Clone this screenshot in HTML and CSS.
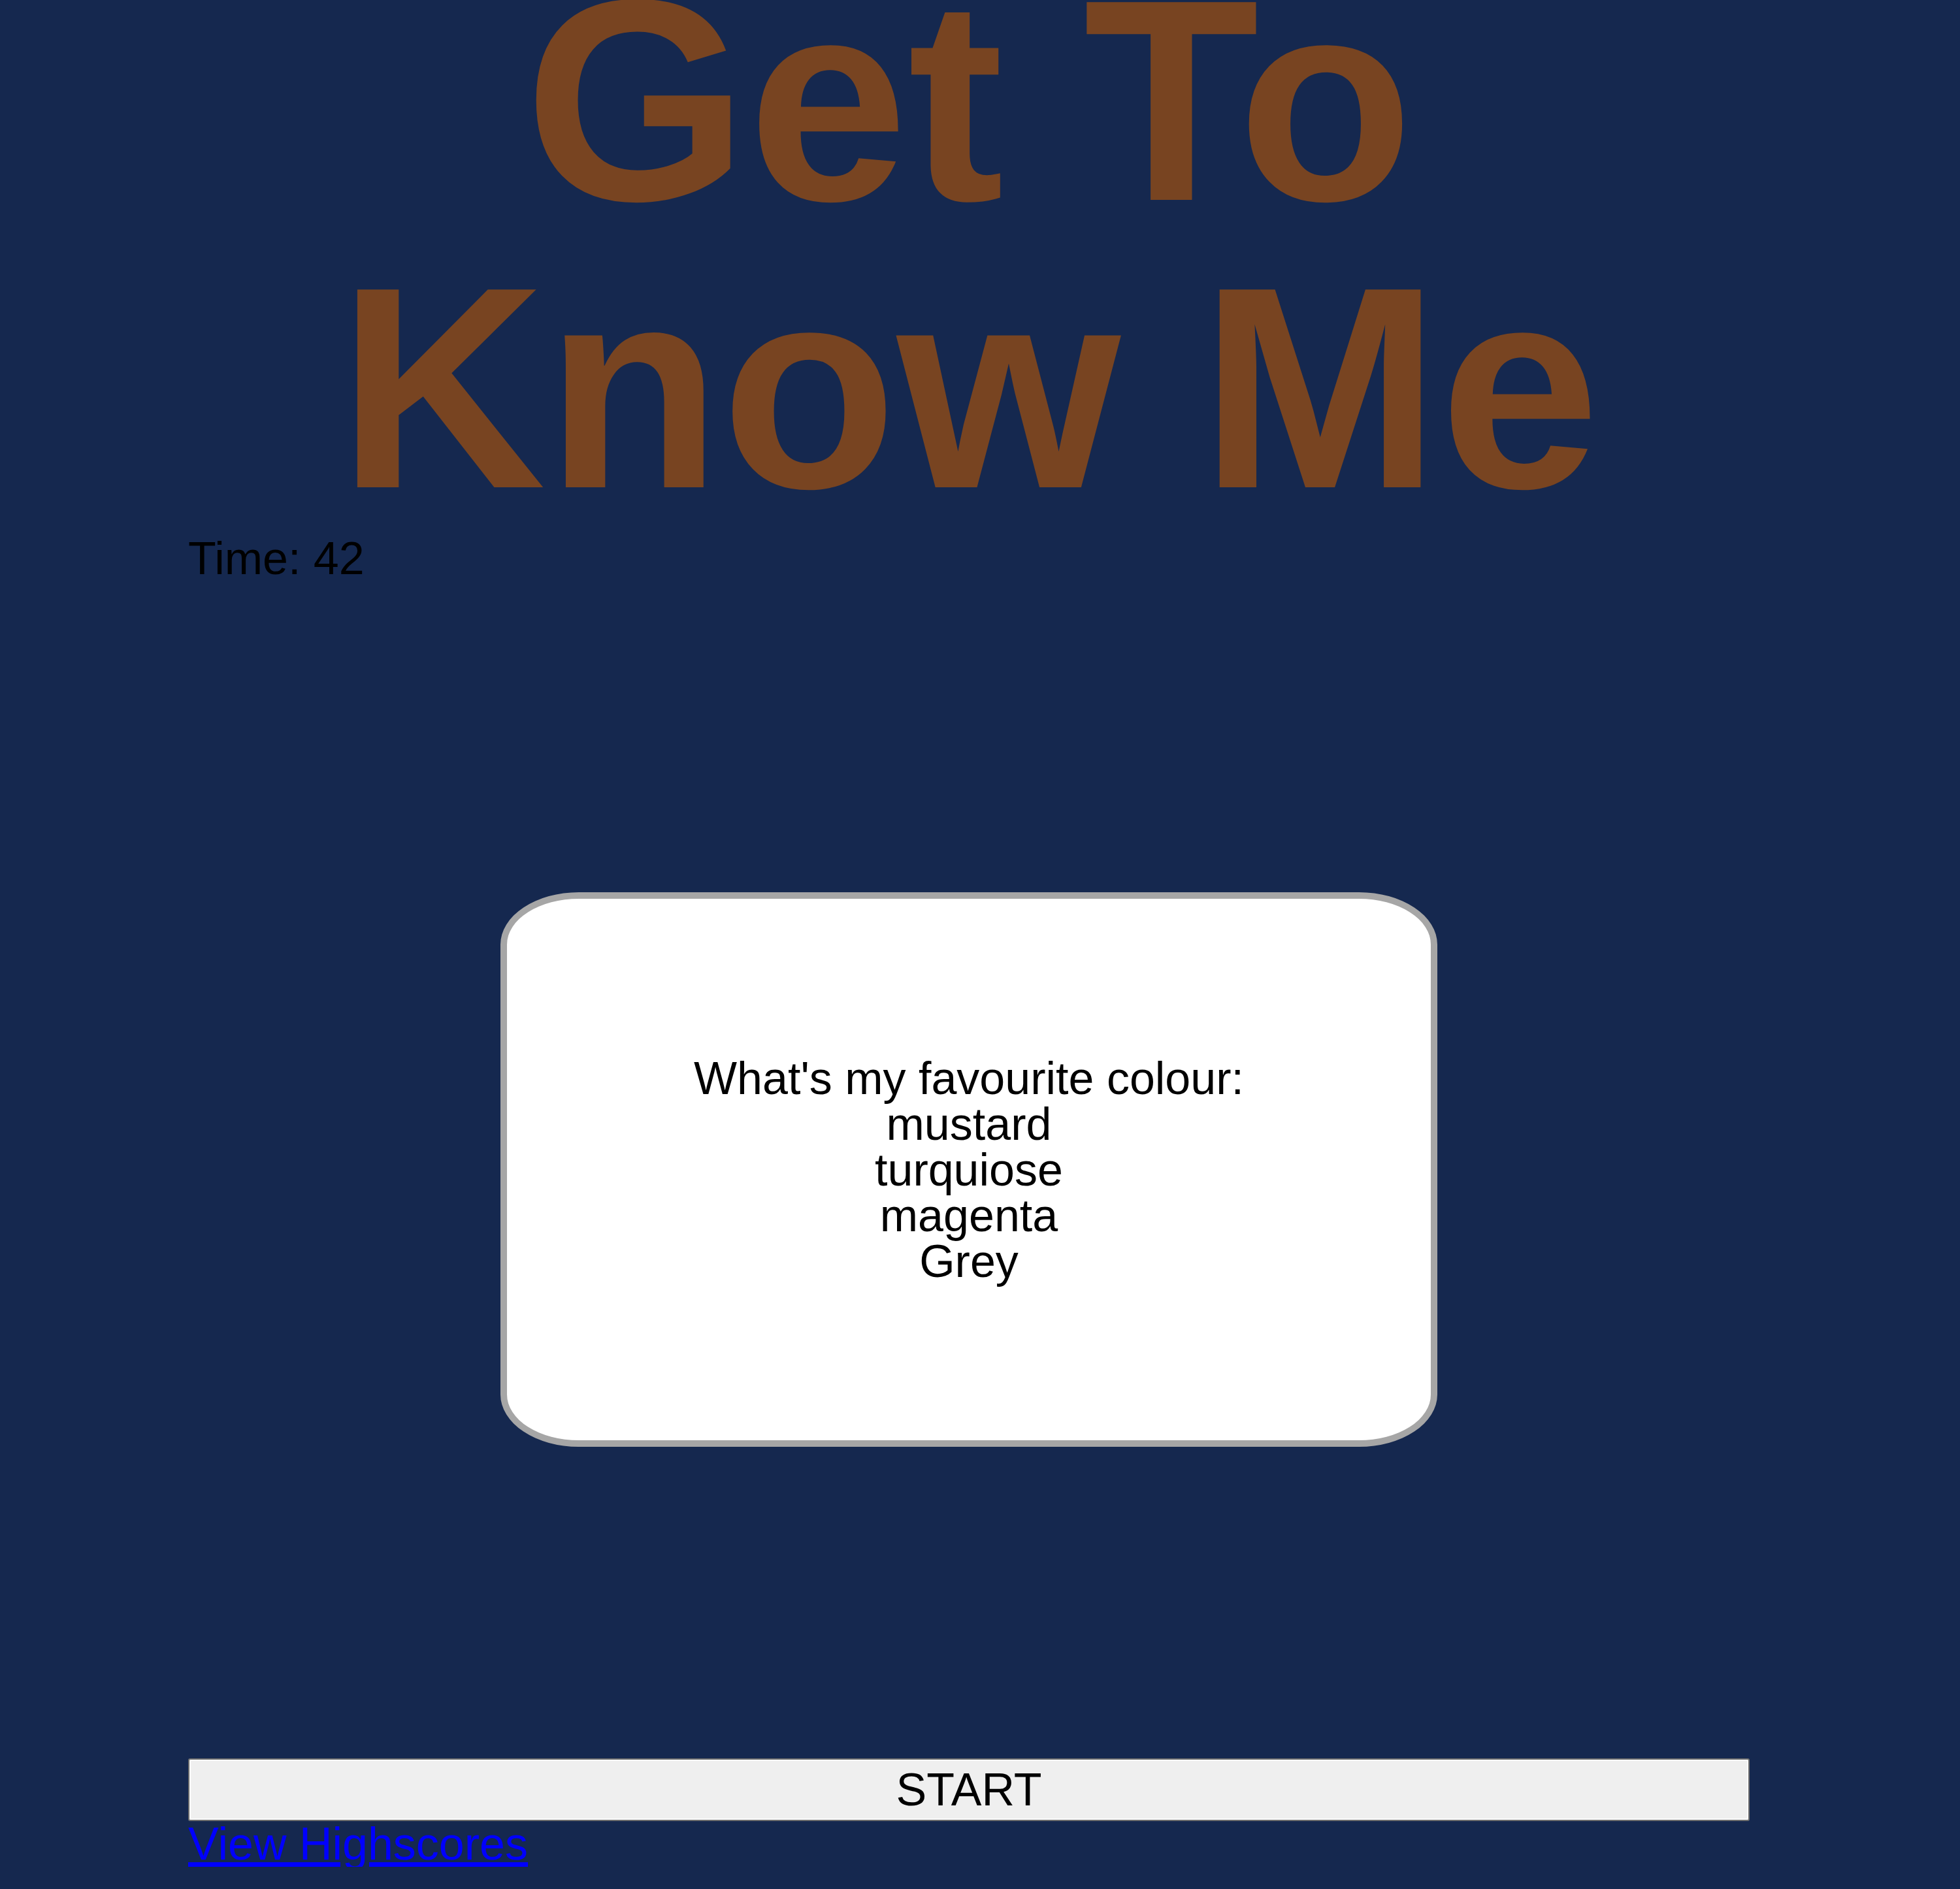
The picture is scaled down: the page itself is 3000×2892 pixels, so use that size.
FILE: index.html
```html
<!DOCTYPE html>
<html lang="en">
<head>
<meta charset="utf-8">
<title>Get To Know Me</title>
<link rel="stylesheet" href="styles.css">
</head>
<body>
<main class="page">
  <h1 class="title">Get To<br>Know Me</h1>
  <div class="timer">Time: 42</div>
  <section class="card">
    <div class="question">What's my favourite colour:<br>mustard<br>turquiose<br>magenta<br>Grey</div>
  </section>
  <button class="start" type="button">START</button>
  <a class="scores" href="#">View Highscores</a>
</main>
</body>
</html>
```
FILE: styles.css
```css
html, body {
  margin: 0;
  padding: 0;
}

body {
  background: #15284f;
  font-family: "Liberation Sans", Arial, sans-serif;
  color: #000;
}

.page {
  width: 2390px;
  margin-left: 288px;
}

.title {
  margin: -66px 0 6px;
  font-size: 440px;
  line-height: 440px;
  font-weight: bold;
  color: #784421;
  text-align: center;
}

.timer {
  font-size: 70px;
  line-height: 70px;
}

.card {
  box-sizing: border-box;
  width: 1434px;
  height: 849px;
  margin: 476px auto 477px;
  background: #fff;
  border: 10px solid #a6a6a6;
  border-radius: 120px / 80px;
  display: flex;
  align-items: center;
  justify-content: center;
}

.question {
  font-size: 70px;
  line-height: 70px;
  text-align: center;
}

.start {
  display: block;
  box-sizing: border-box;
  width: 100%;
  height: 96px;
  margin: 0;
  padding: 0;
  background: #efefef;
  border: 2px solid #6f6f6f;
  box-shadow: inset 0 0 0 2px #fbfbfb;
  border-radius: 3px;
  font-family: "Liberation Sans", Arial, sans-serif;
  font-size: 70px;
  line-height: 70px;
  color: #000;
}

.scores {
  display: inline-block;
  font-size: 70px;
  line-height: 70px;
  color: #0000ff;
  text-decoration: underline;
}
```
